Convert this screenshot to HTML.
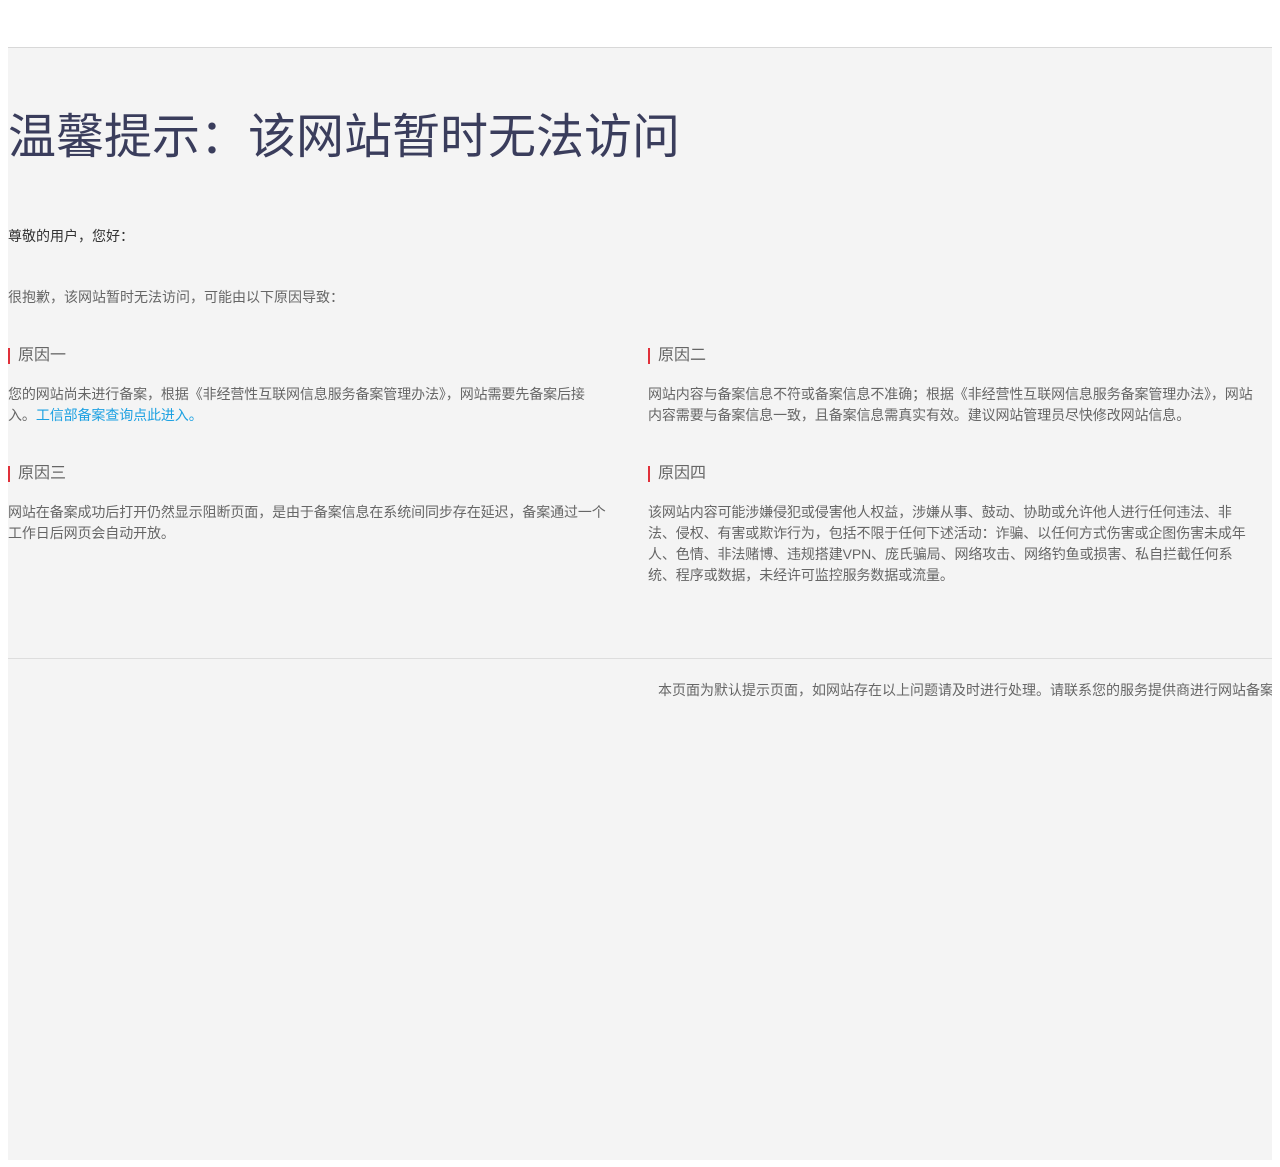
<!DOCTYPE html>
<html><head><meta charset="utf-8"><style>
html,body{margin:0;padding:0;background:#fff;}
body{margin:8px;font-family:"Liberation Sans","Noto Sans CJK SC",sans-serif;}
.wrap{position:absolute;left:8px;top:47px;width:1264px;height:1112px;background:#f4f4f4;border-top:1px solid #d8d8d8;overflow:hidden;}
.abs{position:absolute;white-space:nowrap;}
h1{position:absolute;left:0;top:62px;margin:0;font-size:48px;font-weight:normal;color:#3a3d5c;line-height:56px;letter-spacing:0;}
.t{font-size:14px;color:#666;line-height:21px;letter-spacing:0;}
.h{font-size:16px;color:#666;padding-left:8px;border-left:2px solid #e0303a;line-height:16px;letter-spacing:0;}
.col{position:absolute;width:605px;font-size:14px;color:#666;line-height:21px;letter-spacing:-0.1px;}
a{color:#1da1e2;text-decoration:none;}
.foot{position:absolute;left:0;top:610px;width:1264px;border-top:1px solid #ddd;}
</style></head><body>
<div class="wrap">
<h1>温馨提示：该网站暂时无法访问</h1>
<div class="abs t" style="left:0;top:178px;color:#333">尊敬的用户，您好：</div>
<div class="abs t" style="left:0;top:239px">很抱歉，该网站暂时无法访问，可能由以下原因导致：</div>
<div class="abs h" style="left:0;top:300px">原因一</div>
<div class="col" style="left:0;width:595px;top:336px">您的网站尚未进行备案，根据《非经营性互联网信息服务备案管理办法》，网站需要先备案后接入。<a>工信部备案查询点此进入。</a></div>
<div class="abs h" style="left:640px;top:300px">原因二</div>
<div class="col" style="left:640px;top:336px">网站内容与备案信息不符或备案信息不准确；根据《非经营性互联网信息服务备案管理办法》，网站内容需要与备案信息一致，且备案信息需真实有效。建议网站管理员尽快修改网站信息。</div>
<div class="abs h" style="left:0;top:418px">原因三</div>
<div class="col" style="left:0;top:454px">网站在备案成功后打开仍然显示阻断页面，是由于备案信息在系统间同步存在延迟，备案通过一个工作日后网页会自动开放。</div>
<div class="abs h" style="left:640px;top:418px">原因四</div>
<div class="col" style="left:640px;top:454px">该网站内容可能涉嫌侵犯或侵害他人权益，涉嫌从事、鼓动、协助或允许他人进行任何违法、非法、侵权、有害或欺诈行为，包括不限于任何下述活动：诈骗、以任何方式伤害或企图伤害未成年人、色情、非法赌博、违规搭建VPN、庞氏骗局、网络攻击、网络钓鱼或损害、私自拦截任何系统、程序或数据，未经许可监控服务数据或流量。</div>
<div class="foot"></div>
<div class="abs t" style="left:650px;top:632px">本页面为默认提示页面，如网站存在以上问题请及时进行处理。请联系您的服务提供商进行网站备案</div>
</div>
</body></html>
